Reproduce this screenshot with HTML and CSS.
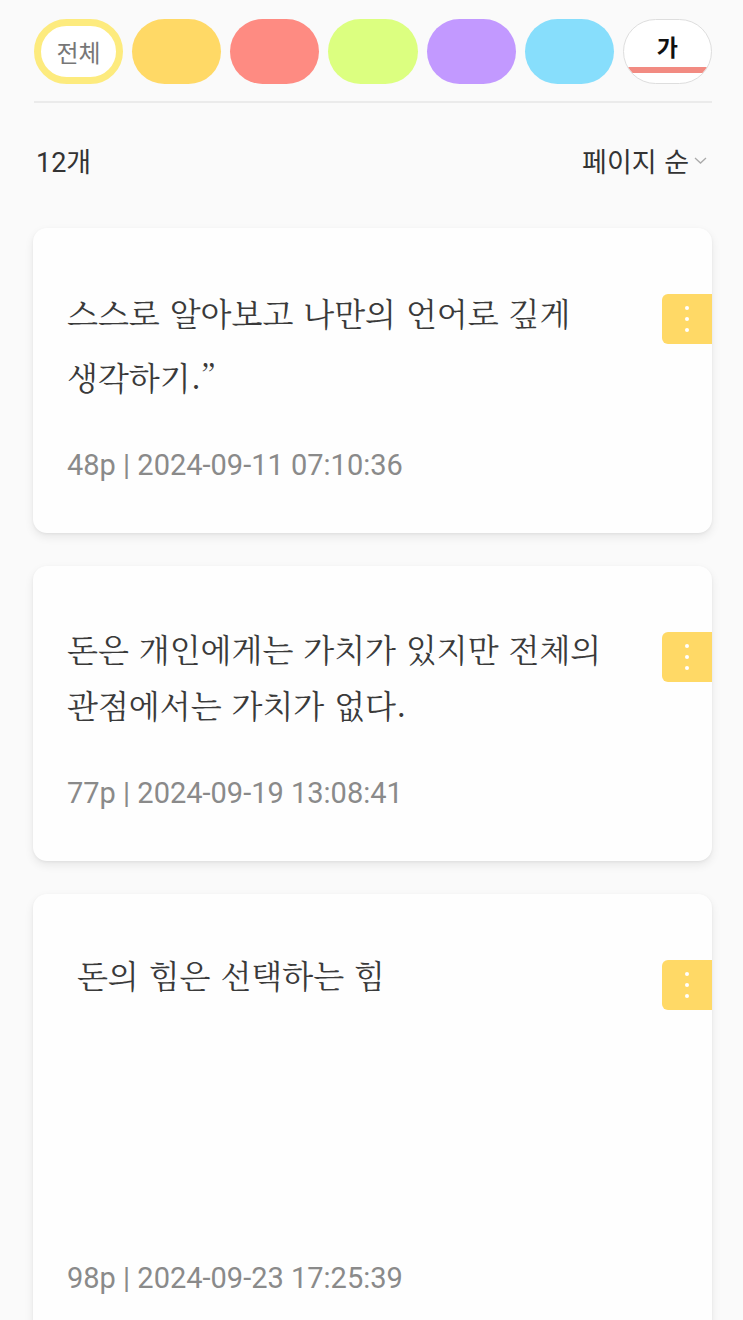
FILE: index.html
```html
<!DOCTYPE html>
<html lang="ko">
<head>
  <meta charset="UTF-8">
  <meta name="viewport" content="width=device-width, initial-scale=1.0">
  <title>문장 수집</title>
  <link rel="stylesheet" href="styles.css">
</head>
<body>
  <div id="app">
    <div id="filters">
      <div class="chip chip-all">전체</div>
      <div class="chip chip-yellow"></div>
      <div class="chip chip-red"></div>
      <div class="chip chip-lime"></div>
      <div class="chip chip-purple"></div>
      <div class="chip chip-blue"></div>
      <div class="chip chip-font">가<span class="chip-bar"></span></div>
    </div>

    <div id="list-head">
      <span class="count">12개</span>
      <span class="sort">페이지 순
        <svg width="15" height="10" viewBox="0 0 15 10"><path d="M2 3l5.5 5 5.5-5" fill="none" stroke="#aaa" stroke-width="1.3"/></svg>
      </span>
    </div>

    <div id="cards">
      <div class="card">
        <div class="card-body">
          <p class="quote quote-tall">스스로 알아보고 나만의 언어로 깊게 생각하기.”</p>
          <div class="meta">48p | 2024-09-11 07:10:36</div>
        </div>
        <button class="menu" type="button"><span></span><span></span><span></span></button>
      </div>

      <div class="card">
        <div class="card-body">
          <p class="quote">돈은 개인에게는 가치가 있지만 전체의 관점에서는 가치가 없다.</p>
          <div class="meta">77p | 2024-09-19 13:08:41</div>
        </div>
        <button class="menu" type="button"><span></span><span></span><span></span></button>
      </div>

      <div class="card">
        <div class="card-body">
          <p class="quote quote-pre"> 돈의 힘은 선택하는 힘




</p>
          <div class="meta">98p | 2024-09-23 17:25:39</div>
        </div>
        <button class="menu" type="button"><span></span><span></span><span></span></button>
      </div>
    </div>
  </div>
</body>
</html>
```

FILE: styles.css
```css
* {
  box-sizing: border-box;
}

:root {
  --page-bg: #fafafa;
  --card-bg: #fefefe;
  --text: #333333;
  --muted: #8a8a8a;
  --accent: #ffd966;
}

html, body {
  margin: 0;
  background: var(--page-bg);
  color: var(--text);
  font-family: Roboto, "Noto Sans CJK KR", sans-serif;
}

#app {
  padding: 19px 31px 0 33px;
}

#filters {
  display: grid;
  grid-template-columns: repeat(7, 1fr);
  gap: 9px;
  padding-bottom: 17px;
  border-bottom: 2px solid #ebebeb;
  margin: 0 0 0 1px;
}

.chip {
  height: 65px;
  border-radius: 33px;
  display: flex;
  align-items: center;
  justify-content: center;
  position: relative;
  overflow: hidden;
  font-family: "Noto Sans CJK KR", sans-serif;
}

.chip-all {
  border: 7px solid #fdeb7e;
  background: #ffffff;
  color: #777777;
  font-size: 24px;
}

.chip-yellow { background: #ffd966; }
.chip-red { background: #fe8b82; }
.chip-lime { background: #dcff80; }
.chip-purple { background: #c299ff; }
.chip-blue { background: #87defc; }

.chip-font {
  background: #ffffff;
  border: 1.5px solid #dedede;
  color: #111111;
  font-size: 23px;
  font-weight: 700;
  padding-bottom: 12px;
}

.chip-bar {
  position: absolute;
  left: 0;
  right: 0;
  bottom: 10px;
  height: 6px;
  background: #f28b82;
}

#list-head {
  display: flex;
  justify-content: space-between;
  align-items: center;
  padding: 24px 4px 0 3px;
  height: 90px;
  font-size: 27px;
  color: #333333;
}

.count {
  font-family: Roboto, "Noto Sans CJK KR", sans-serif;
}

.sort {
  display: flex;
  align-items: center;
  gap: 4px;
  font-family: "Noto Sans CJK KR", sans-serif;
}

#cards {
  display: flex;
  flex-direction: column;
  gap: 33px;
  padding-top: 35px;
}

.card {
  display: flex;
  align-items: flex-start;
  background: var(--card-bg);
  border-radius: 14px;
  box-shadow: 0 4px 10px rgba(0, 0, 0, 0.08), 0 1px 3px rgba(0, 0, 0, 0.05);
}

.card-body {
  flex: 1;
  padding: 57px 20px 50px 34px;
}

.quote {
  margin: -3px 0 43px;
  font-family: "Noto Serif CJK KR", "Noto Sans CJK KR", serif;
  font-size: 32px;
  line-height: 56px;
  color: #3a3a3a;
  word-break: keep-all;
}

.quote-tall {
  line-height: 64px;
  margin-top: -5px;
  margin-bottom: 39px;
}

.quote-pre {
  white-space: pre-wrap;
  margin-top: -5px;
  margin-bottom: 34px;
}

.meta {
  font-size: 29px;
  line-height: 36px;
  color: var(--muted);
}

.menu {
  margin-top: 66px;
  width: 50px;
  height: 50px;
  border: 0;
  padding: 0;
  border-radius: 6px 0 0 6px;
  background: var(--accent);
  display: flex;
  flex-direction: column;
  align-items: center;
  justify-content: center;
  gap: 7px;
}

.menu span {
  width: 4px;
  height: 4px;
  border-radius: 50%;
  background: #ffffff;
}
```
